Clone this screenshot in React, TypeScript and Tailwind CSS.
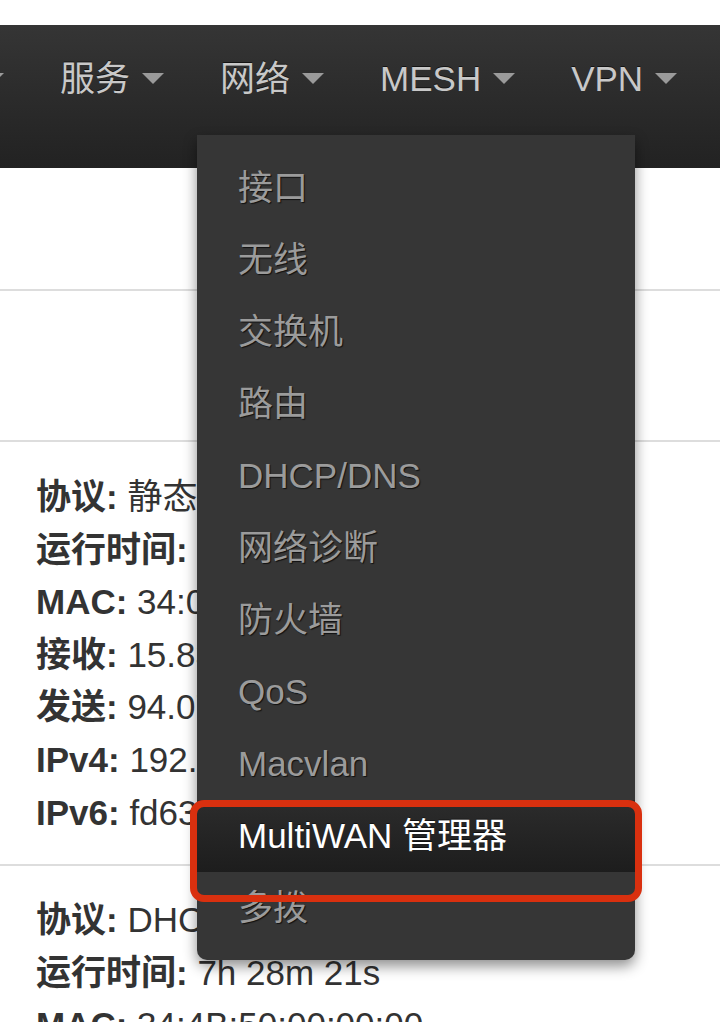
import React from "react";

const navItems = ["系统", "服务", "网络", "MESH", "VPN"];

const menuItems = [
  "接口",
  "无线",
  "交换机",
  "路由",
  "DHCP/DNS",
  "网络诊断",
  "防火墙",
  "QoS",
  "Macvlan",
  "MultiWAN 管理器",
  "多拨",
];

const block1: [string, string][] = [
  ["协议:", "静态地址"],
  ["运行时间:", "7h 28m 40s"],
  ["MAC:", "34:0B:50:00:00:01"],
  ["接收:", "15.83 MB (98213 数据包)"],
  ["发送:", "94.07 MB (87311 数据包)"],
  ["IPv4:", "192.168.1.1/24"],
  ["IPv6:", "fd63:1a2b:3c4d::1/60"],
];

const block2: [string, string][] = [
  ["协议:", "DHCP 客户端"],
  ["运行时间:", "7h 28m 21s"],
  ["MAC:", "34:4B:50:00:00:00"],
];

const Caret = () => (
  <span className="ml-[12px] inline-block h-0 w-0 border-x-[11px] border-t-[11px] border-x-transparent border-t-[#9a9a9a]" />
);

const InfoRow = ({ label, value }: { label: string; value: string }) => (
  <div className="whitespace-nowrap">
    <span className="font-bold">{label}</span> {value}
  </div>
);

export default function App() {
  return (
    <div className="relative h-[1022px] overflow-hidden bg-white font-['Liberation_Sans','Noto_Sans_CJK_SC',sans-serif] text-[35px] text-[#333]">
      <div className="h-[25px]" />

      {/* 頂部導航列 */}
      <nav className="h-[143px] overflow-hidden bg-gradient-to-b from-[#353535] to-[#222222]">
        <ul className="-ml-[100px] flex items-center gap-[56px] pt-[28px] leading-[51px] text-[#c8c8c8] [text-shadow:0_-1px_0_rgba(0,0,0,0.6)]">
          {navItems.map((item) => (
            <li key={item} className="flex shrink-0 items-center whitespace-nowrap">
              {item}
              <Caret />
            </li>
          ))}
        </ul>
      </nav>

      <div className="h-[121px]" />
      <div className="h-[2px] bg-[#dddddd]" />
      <div className="h-[149px]" />
      <div className="h-[2px] bg-[#dddddd]" />

      <div className="px-[36px] pt-[29px] pb-[25px] leading-[52.6px]">
        {block1.map(([l, v]) => (
          <InfoRow key={l} label={l} value={v} />
        ))}
      </div>
      <div className="h-[2px] bg-[#dddddd]" />
      <div className="px-[36px] pt-[28px] leading-[52.6px]">
        {block2.map(([l, v]) => (
          <InfoRow key={l} label={l} value={v} />
        ))}
      </div>

      {/* 網路下拉選單 */}
      <ul className="absolute left-[197px] top-[135px] w-[438px] rounded-b-[10px] bg-[#363636] py-[17px] pb-[16px] shadow-[0_6px_14px_rgba(0,0,0,0.45)]">
        {menuItems.map((item) =>
          item === "MultiWAN 管理器" ? (
            <li
              key={item}
              className="h-[72px] bg-gradient-to-b from-[#2c2c2c] to-[#1d1d1d] pl-[41px] leading-[72px] text-white [text-shadow:0_-1px_0_rgba(0,0,0,0.5)]"
            >
              {item}
            </li>
          ) : (
            <li
              key={item}
              className="h-[72px] pl-[41px] leading-[72px] text-[#9b9b9b] [text-shadow:1px_1px_1px_rgba(0,0,0,0.7)]"
            >
              {item}
            </li>
          )
        )}
      </ul>

      {/* 紅色標示框 */}
      <div className="absolute left-[190px] top-[800px] h-[102px] w-[452px] rounded-[14px] border-[7px] border-[#d9300f]" />
    </div>
  );
}
